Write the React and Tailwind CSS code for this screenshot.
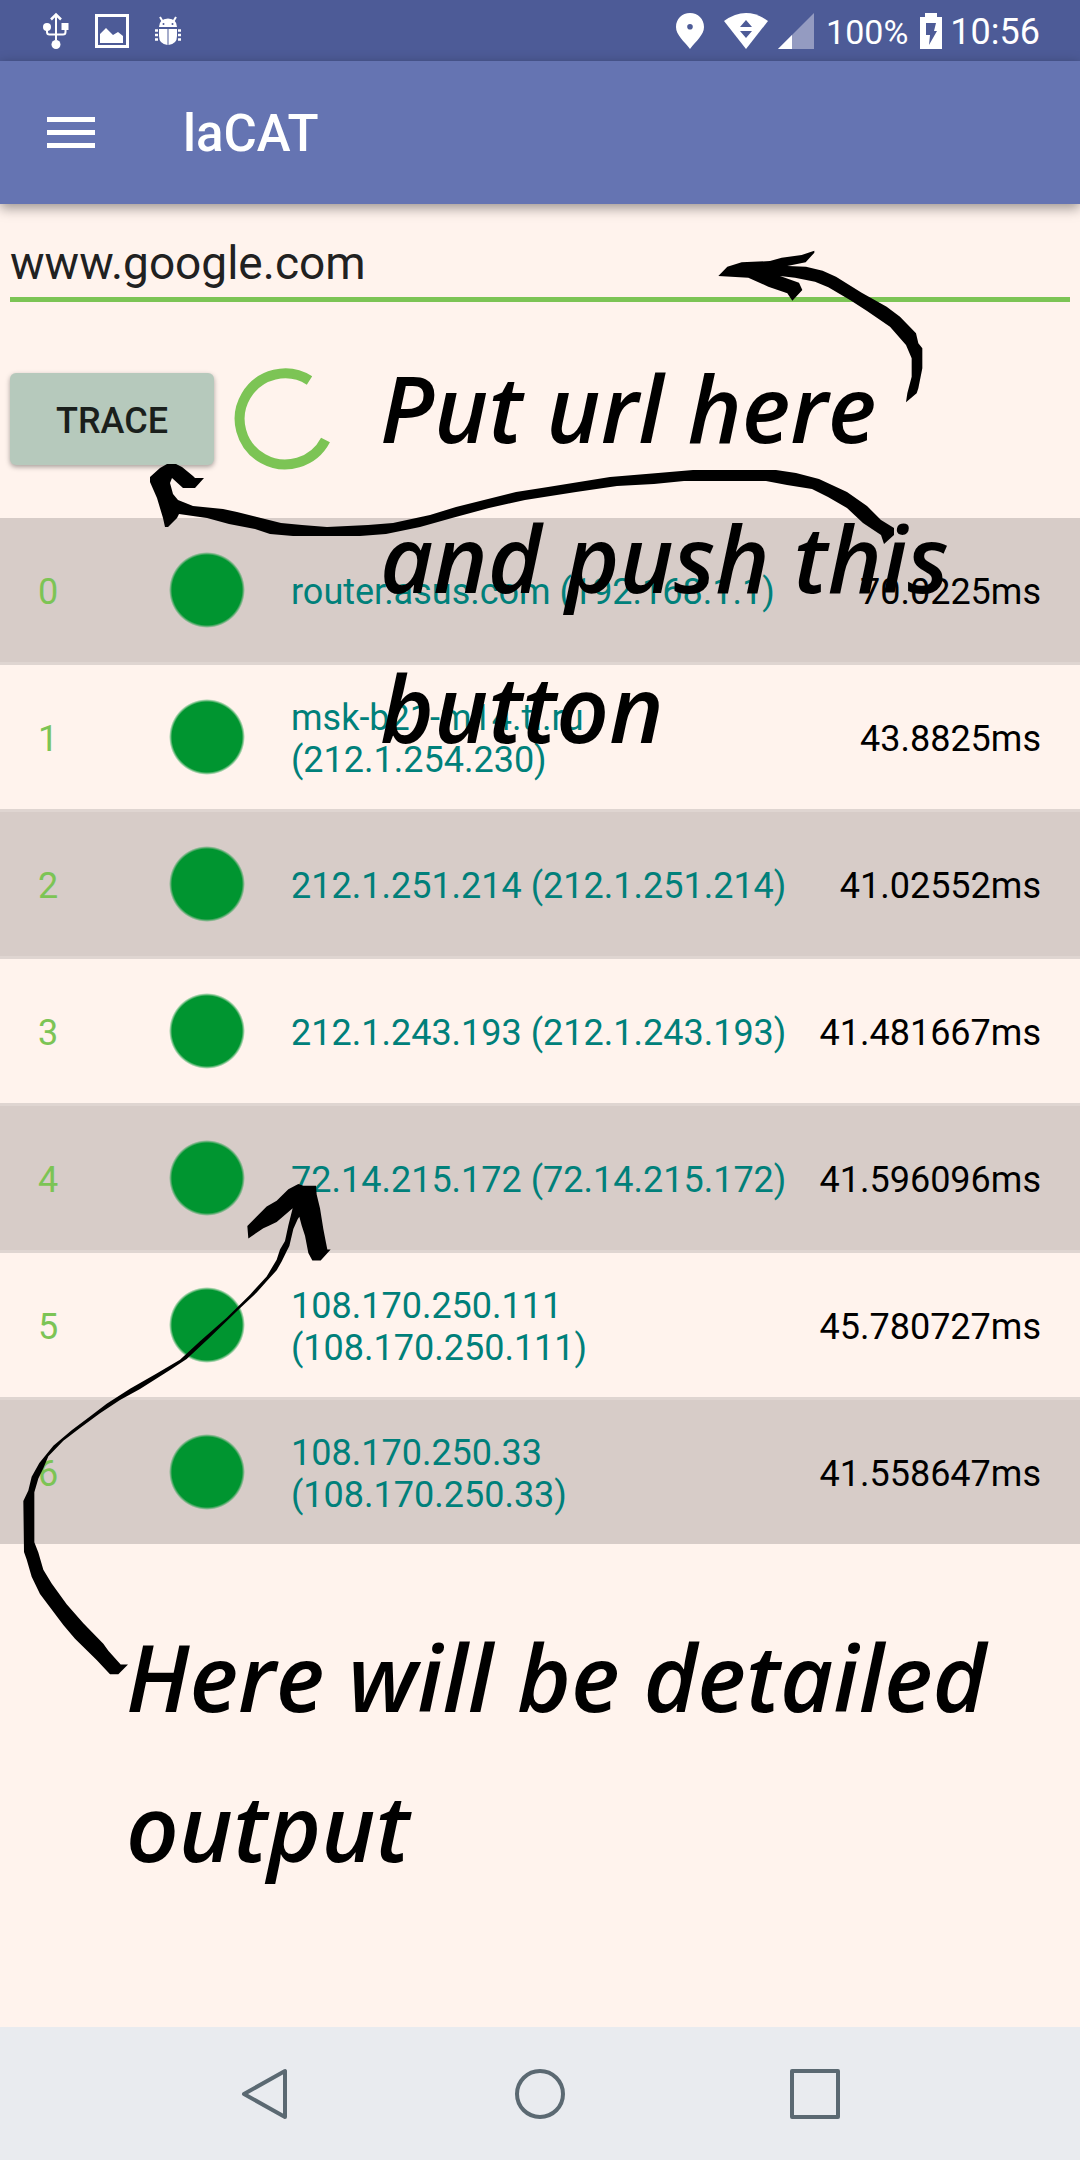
import React from "react";

const hops = [
  { name: "router.asus.com (192.168.1.1)", time: "70.0225ms" },
  { name: "msk-b21-m14.ti.ru (212.1.254.230)", time: "43.8825ms" },
  { name: "212.1.251.214 (212.1.251.214)", time: "41.02552ms" },
  { name: "212.1.243.193 (212.1.243.193)", time: "41.481667ms" },
  { name: "72.14.215.172 (72.14.215.172)", time: "41.596096ms" },
  { name: "108.170.250.111 (108.170.250.111)", time: "45.780727ms" },
  { name: "108.170.250.33 (108.170.250.33)", time: "41.558647ms" },
];

function UsbIcon() {
  return (
    <svg width="28" height="38" viewBox="0 0 28 38" fill="none" stroke="white" strokeWidth="2" aria-hidden="true">
      <path d="M14 4V28M5 14V20Q5 22.500 7.500 22.500H21Q23.500 22.500 23.500 20V14" />
      <path d="M9 7.500L14 2.500L19 7.500" strokeWidth="2.500" />
      <circle cx="5" cy="15" r="4" fill="white" stroke="none" />
      <rect x="19.500" y="11" width="7" height="7" fill="white" stroke="none" />
      <circle cx="14" cy="32.500" r="4.500" fill="white" stroke="none" />
    </svg>
  );
}

function PictureIcon() {
  return (
    <svg width="34" height="34" viewBox="0 0 34 34" aria-hidden="true">
      <rect x="1.500" y="1.500" width="31" height="31" fill="none" stroke="white" strokeWidth="3" />
      <path d="M5 20L11 14L18 21L23 18L28 22V29H5Z" fill="white" />
    </svg>
  );
}

function BugIcon() {
  return (
    <svg width="28" height="30" viewBox="0 0 28 30" fill="white" aria-hidden="true">
      <path d="M5 11Q5 3 14 2.500Q23 3 23 11Z" />
      <path d="M6 1L9 6M22 1L19 6" stroke="white" strokeWidth="2" />
      <path d="M5 13H13.500V29Q5 28 5 20ZM14.500 13H23V20Q23 28 14.500 29Z" />
      <path d="M1 14.500H4M1 19H4M1 23.500H4M24 14.500H27M24 19H27M24 23.500H27" stroke="white" strokeWidth="2.500" />
      <circle cx="9.500" cy="8" r="1" fill="#4d5b97" />
      <circle cx="18.500" cy="8" r="1" fill="#4d5b97" />
    </svg>
  );
}

function StatusBar() {
  return (
    <div className="flex h-[61px] items-center justify-between bg-[#4d5b97] pr-10 pl-[42px] text-white">
      <div className="flex items-center gap-[25px]">
        <UsbIcon />
        <PictureIcon />
        <BugIcon />
      </div>
      <div className="flex items-center">
        <svg width="28" height="36" viewBox="0 0 28 36" aria-hidden="true">
          <path fillRule="evenodd" fill="white" d="M14 0C6 0 0 6 0 14C0 22 8 28 14 36C20 28 28 22 28 14C28 6 22 0 14 0ZM14 11A2.800 2.800 0 1 1 14 16.600A2.800 2.800 0 1 1 14 11Z" />
        </svg>
        <svg className="ml-5" width="44" height="36" viewBox="0 0 44 36" aria-hidden="true">
          <path d="M0 8Q22 -8 44 8L22 36Z" fill="white" />
          <path d="M22 7L28 14H16ZM16 18H28L22 25Z" fill="#4d5b97" />
        </svg>
        <svg className="ml-[10px]" width="36" height="36" viewBox="0 0 36 36" aria-hidden="true">
          <path d="M0 36L36 0V36Z" fill="#949bc1" />
          <path d="M0 36L14 22V36Z" fill="white" />
        </svg>
        <span className="ml-3 pt-[2px] text-[34px] leading-10">100%</span>
        <svg className="ml-3" width="22" height="36" viewBox="0 0 22 36" aria-hidden="true">
          <path d="M5 0H17V4H22V36H0V4H5Z" fill="white" />
          <path d="M6 10H16L14 18H17L9 32L10 22H6Z" fill="#4d5b97" />
        </svg>
        <span className="ml-2 pt-[2px] text-[36px] leading-10">10:56</span>
      </div>
    </div>
  );
}

function Annotations() {
  return (
    <div className="pointer-events-none absolute inset-0 text-[92px] leading-[150px] font-semibold text-black italic [font-family:'Open_Sans',sans-serif]">
      <svg className="absolute top-[26px] left-[700px]" width="260" height="180" viewBox="0 0 780 540" aria-hidden="true">
        <path d="M55 138L82 110L125 97L210 93L245 83L305 75L343 62L343 68L317 97L262 108L318 110L368 122L408 140L485 188L560 230L600 260L648 310L655 340L667 355L667 415L655 475L650 490L618 517L622 490L635 440L635 385L618 345L570 290L500 242L450 210L385 172L345 155L285 143L240 138L297 158L307 180L277 212L262 190L205 170L145 143Z" />
      </svg>
      <svg className="absolute top-[256px] left-[140px]" width="760" height="90" viewBox="140 460 760 90" aria-hidden="true">
        <path d="M167 464L176 464L182 467L193 476L195 478L204 478L195 488L183 488L172 478L170 483L173 494L178 500L193 506L223 509L237 512L265 519L281 523L302 525L327 527L368 525L393 523L430 515L456 507L516 492L548 487L610 477L658 473L693 470L776 470L796 473L819 479L847 492L867 506L881 520L894 528L894 535L884 544L881 535L863 523L847 508L828 497L812 489L787 485L766 481L684 481L654 484L617 486L576 492L525 500L489 508L452 518L420 527L386 534L360 536L293 536L270 534L255 529L229 524L207 518L179 514L177 518L168 527L165 527L163 518L157 498L150 482L150 477L160 468Z" />
      </svg>
      <svg className="absolute top-[956px] left-0" width="400" height="540" viewBox="0 0 1200 1568" preserveAspectRatio="none" aria-hidden="true">
        <path d="M895 70L910 75L948 75L950 100L960 140L970 200L978 240L982 260L992 260L962 292L937 292L925 270L915 220L905 190L898 165L893 172L880 200L868 250L860 265L845 295L830 320L800 352L770 385L715 435L630 515L560 578L510 610L420 665L360 697L300 735L240 778L190 815L145 860L130 895L115 925L103 965L103 1110L115 1140L130 1190L155 1230L200 1290L250 1345L310 1405L325 1425L362 1465L384 1465L355 1493L330 1493L290 1452L225 1390L190 1350L120 1260L95 1210L80 1160L72 1138L70 990L85 960L95 920L118 880L160 830L215 785L270 745L320 708L390 664L470 620L540 580L600 526L680 458L750 391L800 338L830 290L840 260L855 235L865 190L878 140L830 180L805 192L790 198L745 228L742 192L800 135L830 118L865 85Z" />
      </svg>
      <p className="absolute top-[129px] left-[380px] w-[620px]">Put url here and push this button</p>
      <p className="absolute top-[1398px] left-[126px] w-[940px]">Here will be detailed output</p>
    </div>
  );
}

export default function App() {
  return (
    <div className="flex min-h-screen flex-col bg-[#fff3ed] [font-family:Roboto,sans-serif]">
      <StatusBar />
      <header className="relative flex h-[143px] items-center bg-[#6574b2] pl-[47px] text-white shadow-[0_4px_12px_rgba(0,0,0,0.4)]">
        <button type="button" aria-label="Open menu" className="flex w-12 flex-col gap-2">
          <span className="h-[5px] w-full bg-white" />
          <span className="h-[5px] w-full bg-white" />
          <span className="h-[5px] w-full bg-white" />
        </button>
        <h1 className="ml-[88px] pt-[3px] text-[51px] leading-[60px] font-medium">laCAT</h1>
      </header>

      <main className="relative flex-1">
        <div className="px-[10px] pt-[29px]">
          <input
            type="text"
            aria-label="Host to trace"
            defaultValue="www.google.com"
            className="block h-[69px] w-full border-b-[5px] border-[#7cc455] bg-transparent pb-1 text-[46px] leading-[60px] text-[#212121] outline-none"
          />
        </div>
        <div className="flex items-center gap-5 px-[10px] pt-[66px] pb-[48px]">
          <button type="button" className="h-[92px] w-[204px] rounded-md bg-[#b6c9bc] pt-[3px] text-[36px] font-medium text-[#1a1f1c] shadow-[0_2px_5px_rgba(0,0,0,0.35)]">
            TRACE
          </button>
          <svg role="img" aria-label="Tracing" width="102" height="102" viewBox="0 0 102 102" fill="none" stroke="#7cc455" strokeWidth="10">
            <path d="M75.500 12.500A45.500 45.500 0 1 0 91.500 72" />
          </svg>
        </div>

        <table className="w-full border-separate border-spacing-0 text-[36px] leading-[42px]">
          <tbody>
            {hops.map((hop, i) => (
              <tr key={hop.name} className="odd:bg-[#d7ccc8]">
                <td className="h-[147px] w-[169px] border-b-[3px] border-[#dfd5d1] pt-[3px] pl-[38px] text-[#7cc455] [tr:last-child>&]:h-36 [tr:last-child>&]:border-b-0">{i}</td>
                <td className="w-[122px] border-b-[3px] border-[#dfd5d1] [tr:last-child>&]:border-b-0">
                  <div className="size-[76px] rounded-full bg-[radial-gradient(circle_closest-side,#009530_92%,transparent_100%)]" />
                </td>
                <td className="border-b-[3px] border-[#dfd5d1] pt-[3px] text-[#00807a] [tr:last-child>&]:border-b-0">{hop.name}</td>
                <td className="w-[290px] border-b-[3px] border-[#dfd5d1] pt-[3px] pr-[39px] text-right whitespace-nowrap text-black [tr:last-child>&]:border-b-0">{hop.time}</td>
              </tr>
            ))}
          </tbody>
        </table>
        <Annotations />
      </main>

      <nav aria-label="System" className="flex h-[133px] items-center justify-center gap-[223px] bg-[#e9ebef]">
        <button type="button" aria-label="Back">
          <svg width="52" height="52" viewBox="0 0 52 52" fill="none" stroke="#5b6972" strokeWidth="4" strokeLinejoin="round">
            <path d="M46 3V49L5 26Z" />
          </svg>
        </button>
        <button type="button" aria-label="Home">
          <svg width="52" height="52" viewBox="0 0 52 52" fill="none" stroke="#5b6972" strokeWidth="4">
            <circle cx="26" cy="26" r="23" />
          </svg>
        </button>
        <button type="button" aria-label="Recent apps">
          <svg width="52" height="52" viewBox="0 0 52 52" fill="none" stroke="#5b6972" strokeWidth="4" strokeLinejoin="round">
            <rect x="3" y="3" width="46" height="46" />
          </svg>
        </button>
      </nav>
    </div>
  );
}
